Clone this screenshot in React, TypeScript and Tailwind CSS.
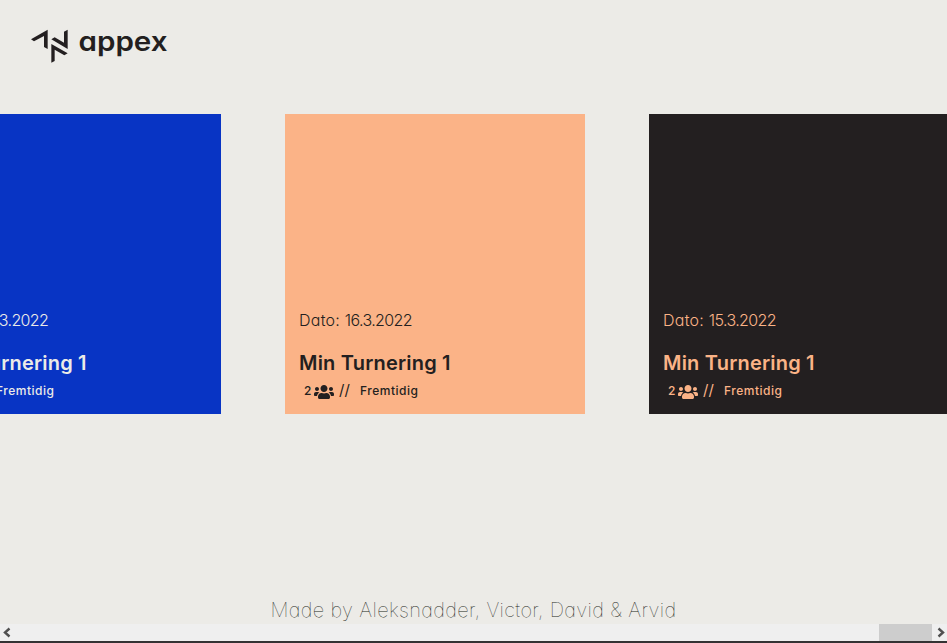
import { FaUsers } from "react-icons/fa";

const cards = [
  { date: "18.3.2022", look: "bg-[#0834c4] text-[#ecebe7]" },
  { date: "16.3.2022", look: "bg-[#fbb387] text-[#231f20]" },
  { date: "15.3.2022", look: "bg-[#231f20] text-[#fbb387]" },
];

function Logo() {
  return (
    <div className="flex h-[114px] shrink-0 items-start pl-[25px] pt-[25px] text-[#231f20]">
      <svg width="50" height="42" viewBox="0 0 150 126" fill="currentColor" className="shrink-0">
        <path d="M18 43 L68 14 V72 L57 66 V33 L27 49 Z" />
        <path d="M79 43 L89 37 L117 53 V20 L128 14 V72 Z" />
        <path d="M79 57 L128 85 L118 91 L89 74 V108 L79 113 Z" />
      </svg>
      <svg width="100" height="42" className="shrink-0 overflow-visible">
        <text x="3.5" y="26" textLength="89" lengthAdjust="spacingAndGlyphs" fill="currentColor" className="font-['Inter',sans-serif] text-[27px] font-semibold">appex</text>
      </svg>
    </div>
  );
}

function Card({ date, look }: { date: string; look: string }) {
  return (
    <article className={`flex h-[300px] w-[300px] shrink-0 flex-col justify-end whitespace-nowrap px-[14px] pb-[13px] ${look}`}>
      <p className="text-[16px] font-light leading-6 tracking-[-0.62px]">
        <span className="tracking-[0.26px]">Dato: </span>{date}
      </p>
      <h2 className="mt-[16px] text-[20px] font-semibold leading-[30px] tracking-[0.2px]">Min Turnering 1</h2>
      <div className="mt-[3px] flex h-[20px] items-center pl-[5px] text-[12px] font-medium">
        <span className="w-[10px]">2</span>
        <FaUsers className="mt-[2px] h-[20px] w-[20px]" />
        <span className="mb-[2px] ml-[5px] w-[21px] text-[15px] font-normal leading-5">//</span>
        <span className="tracking-[0.5px]">Fremtidig</span>
      </div>
    </article>
  );
}

function ScrollBar() {
  return (
    <div className="flex h-[19px] shrink-0 items-center border-b-2 border-[#343233] bg-[#efefef] text-[#505050]">
      <svg width="17" height="17" fill="none" stroke="currentColor" strokeWidth="2.4"><path d="M9.5 4.5 L5 8.5 L9.5 12.5" /></svg>
      <div className="ml-auto h-[17px] w-[53px] bg-[#cdcdcd]" />
      <svg width="15" height="17" fill="none" stroke="currentColor" strokeWidth="2.4"><path d="M6.5 4.5 L11 8.5 L6.5 12.5" /></svg>
    </div>
  );
}

export default function App() {
  return (
    <div className="flex h-[643px] w-full flex-col overflow-hidden bg-[#ecebe7] font-['Inter',sans-serif] [font-feature-settings:'cv11']">
      <Logo />
      <main className="-ml-[79px] flex gap-16">
        {cards.map((card) => <Card key={card.date} {...card} />)}
      </main>
      <footer className="mt-auto flex h-[29px] shrink-0 justify-center whitespace-nowrap text-[20px] font-thin leading-[30px] tracking-[0.36px] text-[#231f20]">
        Made by Aleksnadder, Victor, David &amp; Arvid
      </footer>
      <ScrollBar />
    </div>
  );
}
